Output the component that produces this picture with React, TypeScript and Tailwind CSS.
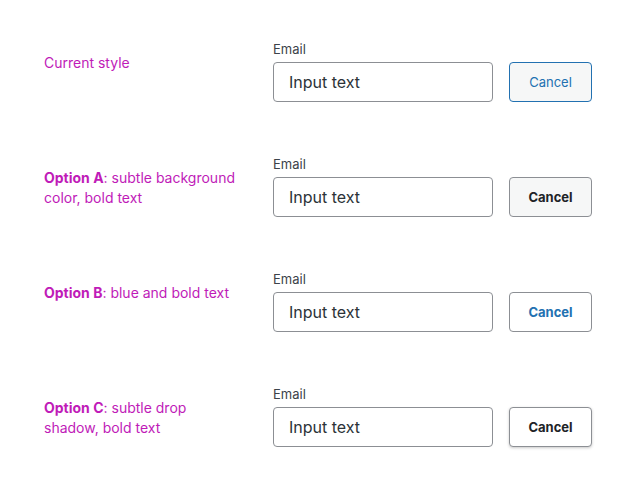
const rows = [
  { title: 'Current style', rest: '', variant: 'current' },
  { title: 'Option A', rest: ': subtle background color, bold text', variant: 'a' },
  { title: 'Option B', rest: ': blue and bold text', variant: 'b' },
  { title: 'Option C', rest: ': subtle drop shadow, bold text', variant: 'c' },
];

const buttonClass = (variant: string) => {
  switch (variant) {
    case 'current':
      return 'border-[#2271b1] bg-[#f6f7f7] text-[#2271b1] font-normal';
    case 'a':
      return 'border-[#8c8f94] bg-[#f6f7f7] text-[#1d2327] font-bold';
    case 'b':
      return 'border-[#8c8f94] bg-white text-[#2271b1] font-bold';
    default:
      return 'border-[#8c8f94] bg-white text-[#1d2327] font-bold shadow-[0_1px_3px_rgba(0,0,0,0.22)]';
  }
};

export default function App() {
  return (
    <div className="min-h-screen bg-white pt-[40px] font-['Inter',sans-serif] antialiased">
      <div className="flex flex-col gap-[53px]">
        {rows.map((row) => (
          <div key={row.variant} className="flex h-[62px]">
            <div className="w-[273px] shrink-0 pl-[44px] pr-[33px] pt-[13px] text-[14px] leading-[20px] text-[#c01bb8]">
              {row.variant === 'current' ? (
                row.title
              ) : (
                <>
                  <span className="font-bold">{row.title}</span>
                  {row.rest}
                </>
              )}
            </div>
            <div className="flex flex-col">
              <label className="mb-[4px] text-[13px] leading-[18px] text-[#3c434a]">Email</label>
              <div className="flex gap-[16px]">
                <div className="flex h-[40px] w-[220px] items-center rounded-[4px] border border-[#8c8f94] px-[15px] text-[16px] text-[#2c3338]">
                  Input text
                </div>
                <button
                  className={`h-[40px] w-[83px] rounded-[4px] border pt-[1px] text-[13px] ${buttonClass(row.variant)}`}
                >
                  Cancel
                </button>
              </div>
            </div>
          </div>
        ))}
      </div>
    </div>
  );
}
